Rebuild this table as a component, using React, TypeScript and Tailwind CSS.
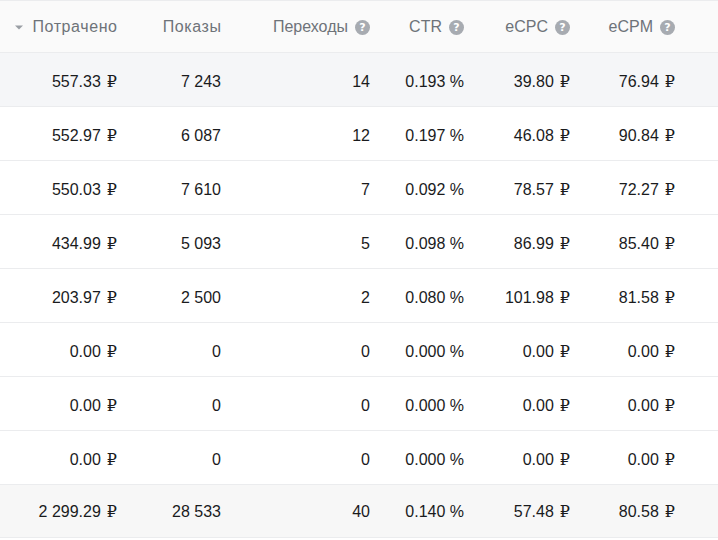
import React from "react";

type Row = [string, string, string, string, string, string];

const rows: Row[] = [
  ["557.33", "7 243", "14", "0.193 %", "39.80", "76.94"],
  ["552.97", "6 087", "12", "0.197 %", "46.08", "90.84"],
  ["550.03", "7 610", "7", "0.092 %", "78.57", "72.27"],
  ["434.99", "5 093", "5", "0.098 %", "86.99", "85.40"],
  ["203.97", "2 500", "2", "0.080 %", "101.98", "81.58"],
  ["0.00", "0", "0", "0.000 %", "0.00", "0.00"],
  ["0.00", "0", "0", "0.000 %", "0.00", "0.00"],
  ["0.00", "0", "0", "0.000 %", "0.00", "0.00"],
];

const total: Row = ["2 299.29", "28 533", "40", "0.140 %", "57.48", "80.58"];

const grid = "grid grid-cols-[117px_104px_149px_94px_106px_105px_1fr] items-center";

function Rub({ v }: { v: string }) {
  return (
    <span>
      {v}
      <span className="ml-[6px] font-['DejaVu_Serif',serif] text-[16px]">₽</span>
    </span>
  );
}

function Help() {
  return (
    <span className="ml-[7px] flex h-[15px] w-[15px] shrink-0 items-center justify-center rounded-full bg-[#a7abb1] font-['DejaVu_Sans',sans-serif] text-[11px] font-bold leading-none text-white">
      ?
    </span>
  );
}

function Cells({ r }: { r: Row }) {
  return (
    <>
      <div className="text-right">
        <Rub v={r[0]} />
      </div>
      <div className="text-right">{r[1]}</div>
      <div className="text-right">{r[2]}</div>
      <div className="text-right">{r[3]}</div>
      <div className="text-right">
        <Rub v={r[4]} />
      </div>
      <div className="text-right">
        <Rub v={r[5]} />
      </div>
      <div />
    </>
  );
}

export default function App() {
  return (
    <div className="w-[718px] h-[540px] bg-white font-['Liberation_Sans',Arial,sans-serif] text-[16px] text-[#1a1b1d] overflow-hidden">
      <div className={`${grid} h-[53px] border-y border-[#ebecee] bg-[#fafafa] pt-[1px] text-[#6e7379]`}>
        <div className="flex items-center justify-end">
          <svg width="8" height="5" viewBox="0 0 8 5" className="mr-[9px]">
            <path d="M0 0.5 L8 0.5 L4 4.5 Z" fill="#9a9ea4" />
          </svg>
          <span className="tracking-[0.6px] -mr-[0.6px]">Потрачено</span>
        </div>
        <div className="text-right">
          <span className="tracking-[0.6px] -mr-[0.6px]">Показы</span>
        </div>
        <div className="flex items-center justify-end">
          Переходы
          <Help />
        </div>
        <div className="flex items-center justify-end">
          CTR
          <Help />
        </div>
        <div className="flex items-center justify-end">
          eCPC
          <Help />
        </div>
        <div className="flex items-center justify-end">
          eCPM
          <Help />
        </div>
        <div />
      </div>
      {rows.map((r, i) => (
        <div
          key={i}
          className={`${grid} h-[54px] border-b border-[#ebecee] pt-[4px] ${i === 0 ? "bg-[#f5f6f8]" : "bg-white"}`}
        >
          <Cells r={r} />
        </div>
      ))}
      <div className={`${grid} h-[53px] border-b border-[#ebecee] pt-[2px] bg-[#f7f7f7]`}>
        <Cells r={total} />
      </div>
    </div>
  );
}
